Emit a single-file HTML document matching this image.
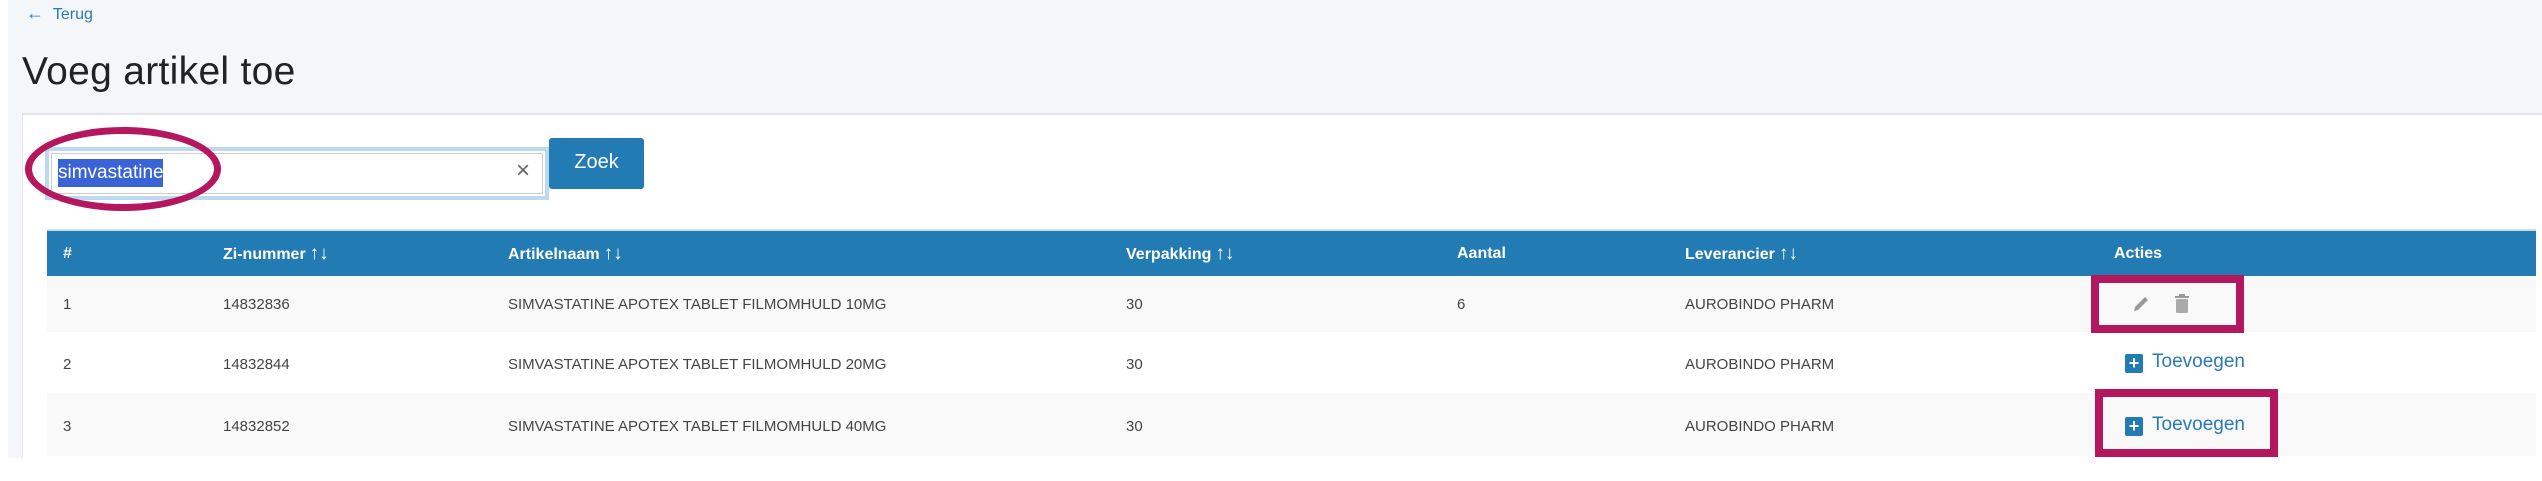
<!DOCTYPE html>
<html><head><meta charset="utf-8"><style>
*{margin:0;padding:0;box-sizing:border-box}
body{width:2542px;height:481px;background:#fff;font-family:"Liberation Sans",sans-serif;position:relative;overflow:hidden}
.bg{position:absolute;left:8px;top:0;width:2534px;height:458px;background:#f5f6fa}
.abs{position:absolute}
.terug{left:26px;top:3px;font-size:16px;color:#2a7ab5}
h1{position:absolute;left:22px;top:50px;font-size:39px;font-weight:normal;color:#222;letter-spacing:0.3px}
.card{left:22px;top:113px;width:2520px;height:345px;background:#fff;border-top:2px solid #e4e5ea;border-left:1px solid #e4e5ea}
.input{left:45px;top:147px;width:504px;height:53px;border:4px solid #bcd9f2;background:#fff}
.input .inner{position:absolute;left:2px;top:2px;right:2px;bottom:2px;border:1px solid #ccc}
.sel{left:58px;top:159px;width:105px;height:28px;background:#3a63d6;color:#fff;font-size:19px;line-height:28px}
.x{left:516px;top:157px;font-size:24px;color:#666}
.btn{left:549px;top:138px;width:95px;height:51px;background:#237bb3;color:#fff;font-size:20px;text-align:center;line-height:48px;border-radius:3px}
.ell{left:25px;top:127px;width:196px;height:84px;border:7px solid #b5175f;border-radius:50%}
.th{left:47px;top:229px;width:2489px;height:47px;background:#237bb3;border-top:2px solid #c8dcea}
.h{position:absolute;top:12px;height:22px;line-height:22px;color:#fff;font-weight:bold;font-size:16px;white-space:nowrap}
.h b{font-size:19px;font-weight:normal;margin-left:4px;line-height:22px}
.row{position:absolute;left:47px;width:2489px}
.c{position:absolute;font-size:15px;color:#444}
.box{border:8px solid #b5175f}
.add{color:#2a7ab5;font-size:19px}
.plus{display:inline-block;width:18px;height:19px;background:#237bb3;color:#fff;font-size:18px;line-height:18px;text-align:center;font-weight:bold;vertical-align:-2px;margin-right:9px;border-radius:2px}
</style></head><body>
<div class="bg"></div>
<div class="abs terug"><span style="font-size:18px">&#8592;</span>&nbsp;&nbsp;Terug</div>
<h1>Voeg artikel toe</h1>
<div class="abs card"></div>
<div class="abs input"><div class="inner"></div></div>
<div class="abs sel">simvastatine</div>
<div class="abs x">×</div>
<div class="abs btn">Zoek</div>
<div class="abs ell"></div>
<div class="abs th">
<span class="h" style="left:16px">#</span>
<span class="h" style="left:176px">Zi-nummer<b>↑↓</b></span>
<span class="h" style="left:461px">Artikelnaam<b>↑↓</b></span>
<span class="h" style="left:1079px">Verpakking<b>↑↓</b></span>
<span class="h" style="left:1410px">Aantal</span>
<span class="h" style="left:1638px">Leverancier<b>↑↓</b></span>
<span class="h" style="left:2067px">Acties</span>
</div>
<div class="row" style="top:276px;height:56px;background:#f9f9f9">
<span class="c" style="left:16px;top:20px">1</span><span class="c" style="left:176px;top:20px">14832836</span><span class="c" style="left:461px;top:20px">SIMVASTATINE APOTEX TABLET FILMOMHULD 10MG</span><span class="c" style="left:1079px;top:20px">30</span><span class="c" style="left:1410px;top:20px">6</span><span class="c" style="left:1638px;top:20px">AUROBINDO PHARM</span>
</div>
<div class="row" style="top:332px;height:61px;background:#fff">
<span class="c" style="left:16px;top:24px">2</span><span class="c" style="left:176px;top:24px">14832844</span><span class="c" style="left:461px;top:24px">SIMVASTATINE APOTEX TABLET FILMOMHULD 20MG</span><span class="c" style="left:1079px;top:24px">30</span><span class="c" style="left:1638px;top:24px">AUROBINDO PHARM</span>
</div>
<div class="row" style="top:393px;height:63px;background:#f9f9f9">
<span class="c" style="left:16px;top:25px">3</span><span class="c" style="left:176px;top:25px">14832852</span><span class="c" style="left:461px;top:25px">SIMVASTATINE APOTEX TABLET FILMOMHULD 40MG</span><span class="c" style="left:1079px;top:25px">30</span><span class="c" style="left:1638px;top:25px">AUROBINDO PHARM</span>
</div>
<div class="abs box" style="left:2091px;top:275px;width:153px;height:58px"></div>
<svg class="abs" style="left:2131px;top:294px" width="20" height="20" viewBox="0 0 20 20"><path d="M3 17 L4 13 L14 3 L17 6 L7 16 Z" fill="#999"/></svg>
<svg class="abs" style="left:2174px;top:294px" width="16" height="20" viewBox="0 0 16 20"><rect x="1" y="2" width="14" height="2" fill="#999"/><rect x="5" y="0" width="6" height="2" fill="#999"/><rect x="2" y="5" width="12" height="14" rx="1" fill="#aaa"/></svg>
<div class="abs add" style="left:2125px;top:351px"><span class="plus">+</span>Toevoegen</div>
<div class="abs box" style="left:2095px;top:389px;width:183px;height:68px"></div>
<div class="abs add" style="left:2125px;top:414px"><span class="plus">+</span>Toevoegen</div>
</body></html>
